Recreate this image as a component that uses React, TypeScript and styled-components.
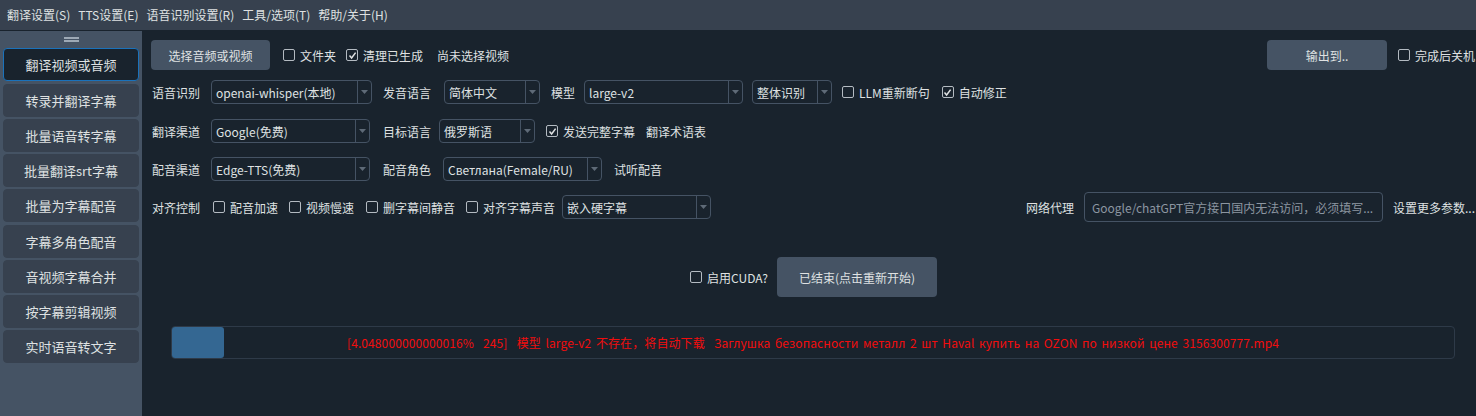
import React from "react";
import styled, { createGlobalStyle } from "styled-components";

const GlobalStyle = createGlobalStyle`
  html, body { margin: 0; padding: 0; background: #19232D; overflow: hidden; }
  body {
    font-family: "Noto Sans CJK SC", "Noto Sans", sans-serif;
    font-size: 12px;
    color: #DFE1E2;
  }
  #root { width: 1476px; height: 416px; }
`;

const Window = styled.div`
  width: 1476px;
  height: 416px;
  display: flex;
  flex-direction: column;
  background: #19232D;
`;

const MenuBar = styled.div`
  height: 31px;
  box-sizing: border-box;
  background: #37414F;
  border-bottom: 1px solid #19232D;
  display: flex;
  align-items: center;
  padding-left: 7px;
  gap: 8px;
`;

const MenuItem = styled.span`
  white-space: nowrap;
  line-height: 16px;
`;

const Body = styled.div`
  flex: 1;
  display: flex;
  min-height: 0;
`;

const Sidebar = styled.div`
  width: 142px;
  flex: none;
  background: #455364;
  box-sizing: border-box;
  padding: 6px 3px 0 3px;
  display: flex;
  flex-direction: column;
  gap: 2.25px;
`;

const Handle = styled.div`
  align-self: center;
  width: 15px;
  height: 5px;
  border-top: 2px solid #9DA9B5;
  border-bottom: 2px solid #9DA9B5;
  box-sizing: border-box;
  margin-bottom: 4px;
`;

const SideButton = styled.div<{ $active?: boolean }>`
  height: 33px;
  box-sizing: border-box;
  border-radius: 4px;
  display: flex;
  align-items: center;
  justify-content: center;
  font-size: 13px;
  color: #DFE1E2;
  background: ${(p) => (p.$active ? "#19232D" : "#37414F")};
  border: 1px solid ${(p) => (p.$active ? "#1A72BB" : "#37414F")};
`;

const Main = styled.div`
  flex: 1;
  display: flex;
  flex-direction: column;
  padding: 9px 0 0 9px;
  min-width: 0;
`;

const Row = styled.div<{ $h?: number; $mt?: number; $gap?: number }>`
  display: flex;
  align-items: center;
  height: ${(p) => p.$h ?? 24}px;
  margin-top: ${(p) => p.$mt ?? 0}px;
  gap: ${(p) => p.$gap ?? 10}px;
  white-space: nowrap;
`;

const Label = styled.span<{ $w?: number; $ml?: number }>`
  display: inline-block;
  width: ${(p) => (p.$w ? `${p.$w}px` : "auto")};
  margin-left: ${(p) => p.$ml ?? 0}px;
  padding-left: 1px;
  box-sizing: border-box;
  white-space: nowrap;
  flex: none;
`;

const Button = styled.div<{ $w: number; $h: number; $ml?: number }>`
  width: ${(p) => p.$w}px;
  height: ${(p) => p.$h}px;
  margin-left: ${(p) => p.$ml ?? 0}px;
  flex: none;
  background: #455364;
  border-radius: 4px;
  display: flex;
  align-items: center;
  justify-content: center;
  color: #DFE1E2;
`;

const ComboBox = styled.div<{ $w: number; $ml?: number }>`
  width: ${(p) => p.$w}px;
  height: 24px;
  margin-left: ${(p) => p.$ml ?? 0}px;
  flex: none;
  box-sizing: border-box;
  border: 1px solid #455364;
  border-radius: 4px;
  display: flex;
  align-items: stretch;
`;

const ComboValue = styled.div`
  flex: 1;
  display: flex;
  align-items: center;
  padding-left: 4px;
  overflow: hidden;
`;

const ComboArrow = styled.div`
  width: 13px;
  border-left: 1px solid #455364;
  display: flex;
  align-items: center;
  justify-content: center;
`;

const CheckWrap = styled.label<{ $ml?: number; $w?: number }>`
  display: inline-flex;
  align-items: center;
  gap: 5px;
  margin-left: ${(p) => p.$ml ?? 0}px;
  width: ${(p) => (p.$w ? `${p.$w}px` : "auto")};
  flex: none;
  white-space: nowrap;
  overflow: hidden;
`;

const Box = styled.span`
  width: 12px;
  height: 12px;
  flex: none;
  box-sizing: border-box;
  border: 1.5px solid #B4BBC2;
  border-radius: 2px;
  display: flex;
  align-items: center;
  justify-content: center;
`;

const TextInput = styled.div<{ $w: number }>`
  width: ${(p) => p.$w}px;
  height: 30px;
  flex: none;
  box-sizing: border-box;
  border: 1px solid #455364;
  border-radius: 4px;
  display: flex;
  align-items: center;
  padding-left: 7px;
  color: #8C96A1;
  overflow: hidden;
`;

const Spacer = styled.div`
  flex: 1;
`;

const CenterRow = styled.div`
  display: flex;
  align-items: center;
  justify-content: center;
  gap: 9px;
  height: 40px;
  margin-top: 35px;
`;

const Progress = styled.div`
  margin: 29px 0 0 20px;
  width: 1284px;
  height: 33px;
  box-sizing: border-box;
  border: 1px solid #2E3A48;
  border-radius: 4px;
  position: relative;
  display: flex;
  align-items: center;
  justify-content: center;
`;

const Chunk = styled.div`
  position: absolute;
  left: 0;
  top: 0;
  bottom: 0;
  border-radius: 3px;
  background: #346792;
`;

const ProgressText = styled.span`
  position: relative;
  color: #F20D0D;
  white-space: pre;
  word-spacing: 1.8px;
  letter-spacing: 0.1px;
`;

const Combo: React.FC<{ w: number; value: string; ml?: number }> = ({ w, value, ml }) => (
  <ComboBox $w={w} $ml={ml}>
    <ComboValue>{value}</ComboValue>
    <ComboArrow>
      <svg width="7" height="4" viewBox="0 0 7 4">
        <path d="M0 0 L7 0 L3.5 4 Z" fill="#5E6A77" />
      </svg>
    </ComboArrow>
  </ComboBox>
);

const Check: React.FC<{ text: string; checked?: boolean; ml?: number; w?: number }> = ({
  text,
  checked,
  ml,
  w,
}) => (
  <CheckWrap $ml={ml} $w={w}>
    <Box>
      {checked && (
        <svg width="9" height="9" viewBox="0 0 9 9">
          <path d="M1.5 4.6 L3.6 7 L7.6 1.6" stroke="#DFE1E2" strokeWidth="1.5" fill="none" />
        </svg>
      )}
    </Box>
    <span>{text}</span>
  </CheckWrap>
);

const sideItems = [
  "翻译视频或音频",
  "转录并翻译字幕",
  "批量语音转字幕",
  "批量翻译srt字幕",
  "批量为字幕配音",
  "字幕多角色配音",
  "音视频字幕合并",
  "按字幕剪辑视频",
  "实时语音转文字",
];

export default function App() {
  return (
    <Window>
      <GlobalStyle />
      <MenuBar>
        <MenuItem>翻译设置(S)</MenuItem>
        <MenuItem>TTS设置(E)</MenuItem>
        <MenuItem>语音识别设置(R)</MenuItem>
        <MenuItem>工具/选项(T)</MenuItem>
        <MenuItem>帮助/关于(H)</MenuItem>
      </MenuBar>
      <Body>
        <Sidebar>
          <Handle />
          {sideItems.map((s, i) => (
            <SideButton key={s} $active={i === 0}>
              {s}
            </SideButton>
          ))}
        </Sidebar>
        <Main>
          <Row $h={30} $gap={0}>
            <Button $w={119} $h={30}>选择音频或视频</Button>
            <Check text="文件夹" ml={13} />
            <Check text="清理已生成" checked ml={10} />
            <Label $ml={13}>尚未选择视频</Label>
            <Spacer />
            <Button $w={120} $h={30}>输出到..</Button>
            <Check text="完成后关机" ml={11} w={78} />
          </Row>
          <Row $mt={10} $gap={0}>
            <Label $w={60}>语音识别</Label>
            <Combo w={161} value="openai-whisper(本地)" />
            <Label $w={62} $ml={10}>发音语言</Label>
            <Combo w={96} value="简体中文" />
            <Label $w={34} $ml={10}>模型</Label>
            <Combo w={159} value="large-v2" />
            <Combo w={80} value="整体识别" ml={9} />
            <Check text="LLM重新断句" ml={10} />
            <Check text="自动修正" checked ml={12} />
          </Row>
          <Row $mt={15} $gap={0}>
            <Label $w={60}>翻译渠道</Label>
            <Combo w={159} value="Google(免费)" />
            <Label $w={57} $ml={12}>目标语言</Label>
            <Combo w={96} value="俄罗斯语" />
            <Check text="发送完整字幕" checked ml={11} />
            <Label $ml={10}>翻译术语表</Label>
          </Row>
          <Row $mt={14} $gap={0}>
            <Label $w={60}>配音渠道</Label>
            <Combo w={159} value="Edge-TTS(免费)" />
            <Label $w={61} $ml={12}>配音角色</Label>
            <Combo w={159} value="Светлана(Female/RU)" />
            <Label $ml={11}>试听配音</Label>
          </Row>
          <Row $mt={11} $h={30} $gap={0}>
            <Label $w={62}>对齐控制</Label>
            <Check text="配音加速" />
            <Check text="视频慢速" ml={11} />
            <Check text="删字幕间静音" ml={12} />
            <Check text="对齐字幕声音" ml={11} />
            <Combo w={149} value="嵌入硬字幕" ml={7} />
            <Spacer />
            <Label $w={59}>网络代理</Label>
            <TextInput $w={299}>Google/chatGPT官方接口国内无法访问，必须填写...</TextInput>
            <Label $w={84} $ml={9}>设置更多参数...</Label>
          </Row>
          <CenterRow>
            <Check text="启用CUDA?" />
            <Button $w={160} $h={40}>已结束(点击重新开始)</Button>
          </CenterRow>
          <Progress>
            <Chunk style={{ width: "52px" }} />
            <ProgressText>
              {"[4.048000000000016%  245]  模型 large-v2 不存在，将自动下载  Заглушка безопасности металл 2 шт Haval купить на OZON по низкой цене 3156300777.mp4"}
            </ProgressText>
          </Progress>
        </Main>
      </Body>
    </Window>
  );
}
